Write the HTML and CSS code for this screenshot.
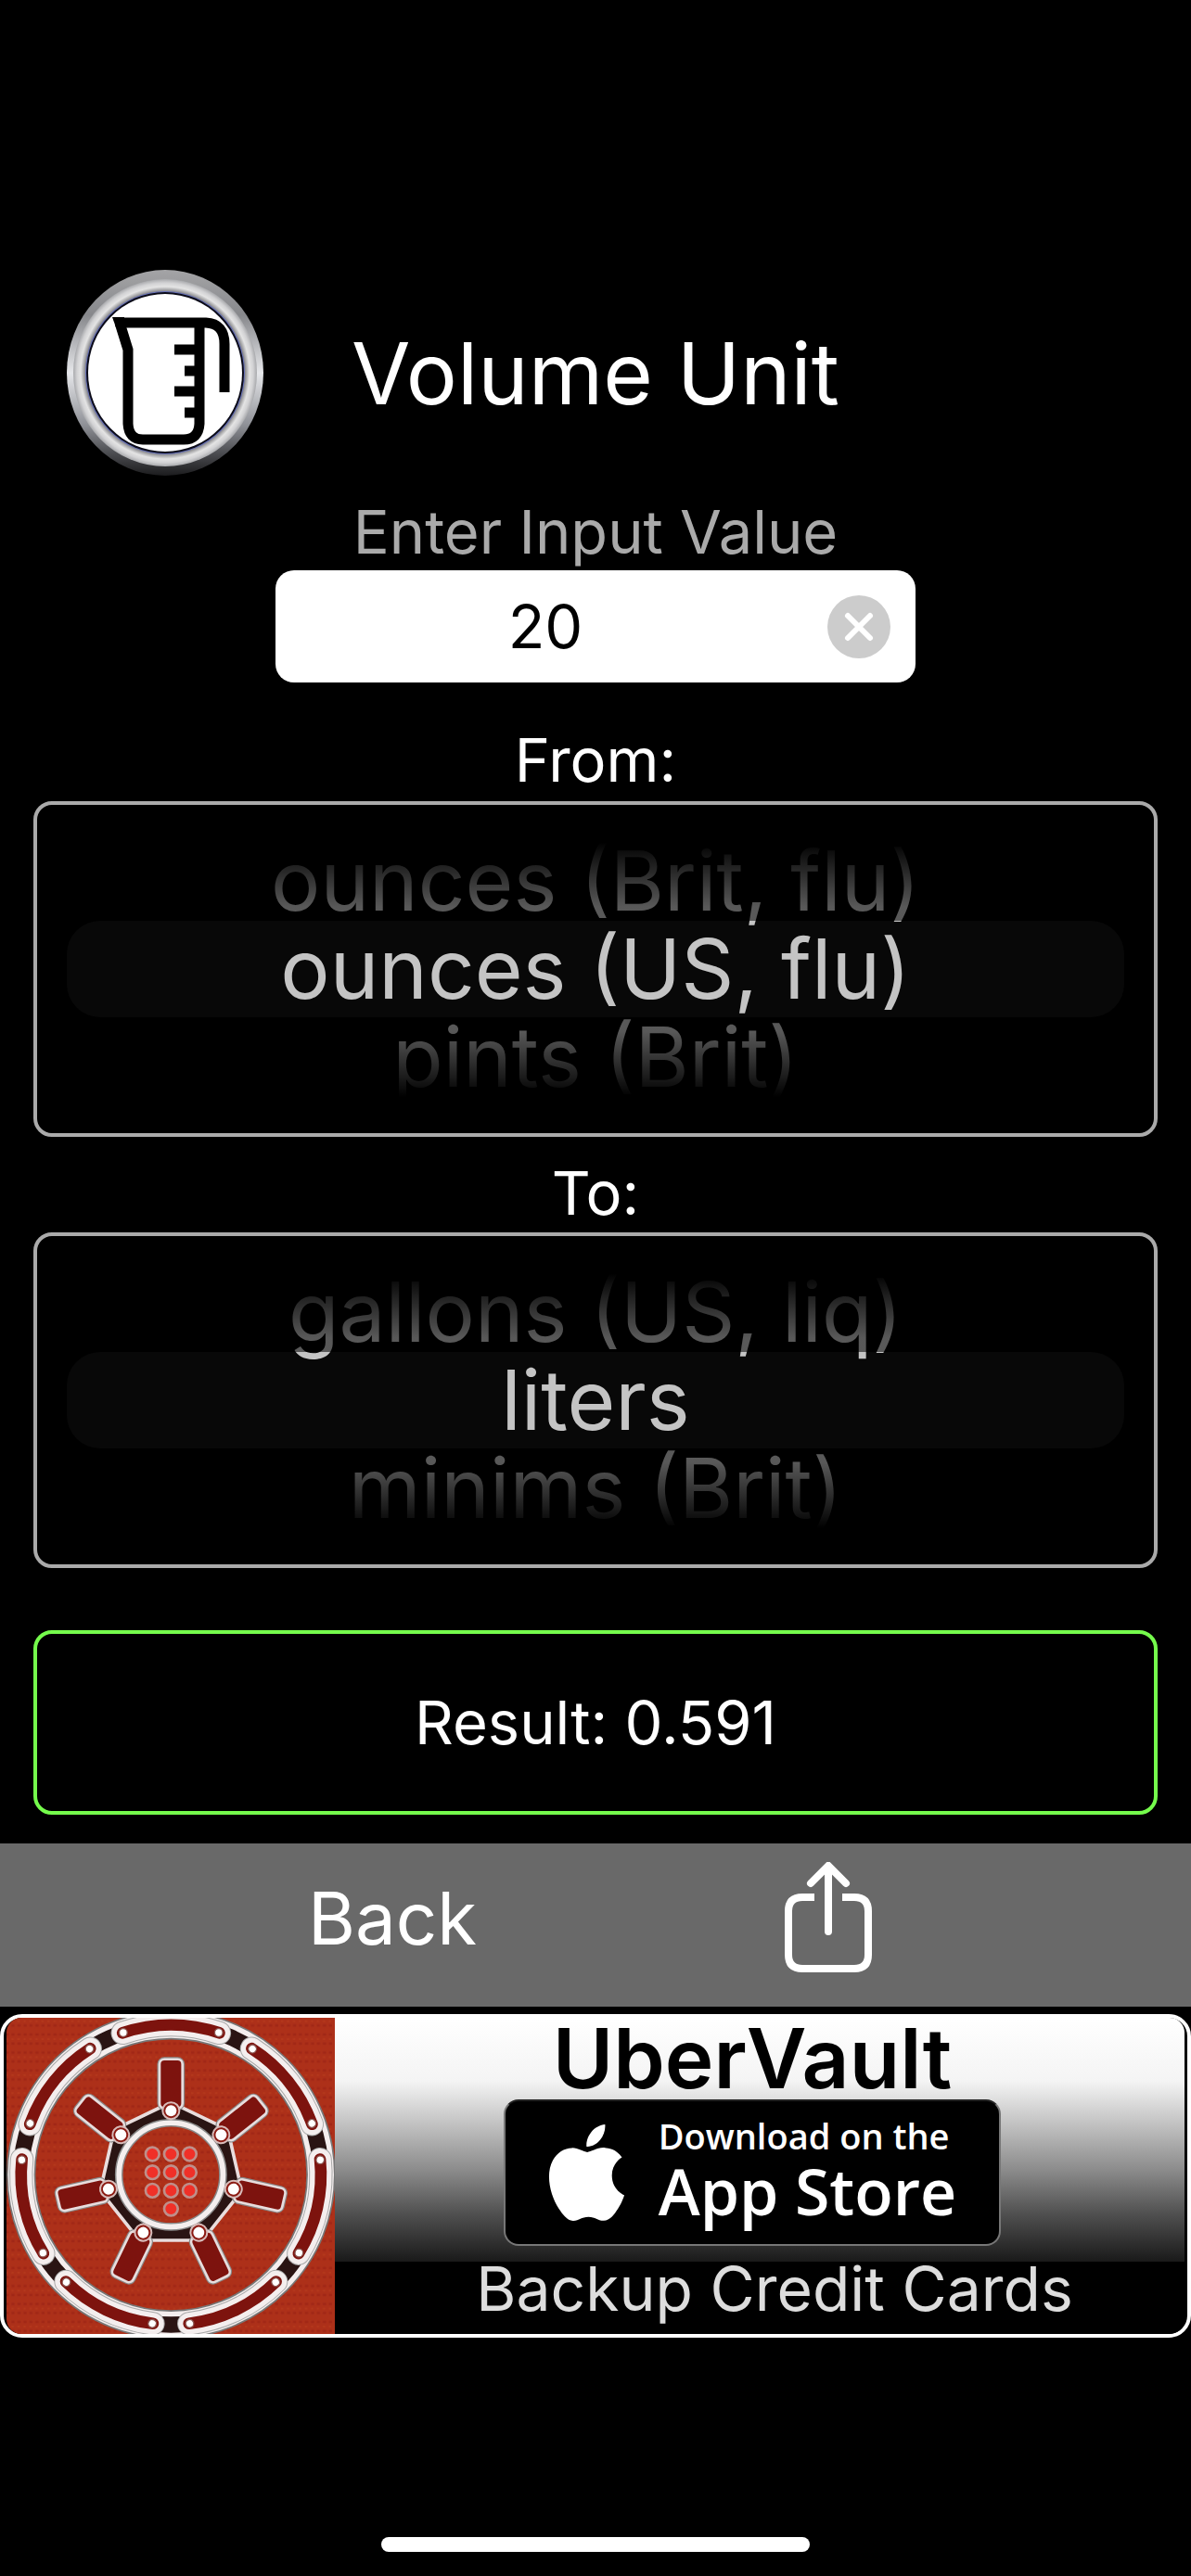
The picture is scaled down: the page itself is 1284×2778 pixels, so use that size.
FILE: index.html
```html
<!DOCTYPE html>
<html lang="en">
<head>
  <meta charset="UTF-8" />
  <meta name="viewport" content="width=device-width, initial-scale=1.0"/>
  <title>Volume Unit</title>
  <link rel="stylesheet" href="styles.css">
</head>
<body>
  <main class="converter">
    <header class="header">
      <svg class="logo" viewBox="0 0 212 223" aria-hidden="true">
        <defs>
          <linearGradient id="rim" x1="0" y1="0" x2="0" y2="1">
            <stop offset="0" stop-color="#a4a4a6"/>
            <stop offset="0.22" stop-color="#87888c"/>
            <stop offset="0.5" stop-color="#e6e7ea"/>
            <stop offset="0.75" stop-color="#909298"/>
            <stop offset="0.9" stop-color="#47484c"/>
            <stop offset="1" stop-color="#1c1c1e"/>
          </linearGradient>
          <radialGradient id="bevel">
            <stop offset="0.86" stop-color="#77777b"/>
            <stop offset="0.92" stop-color="#e4e4e4"/>
            <stop offset="0.96" stop-color="#d2d2d4"/>
            <stop offset="1" stop-color="#a8a9ac"/>
          </radialGradient>
        </defs>
        <ellipse cx="106" cy="111" rx="106" ry="111" fill="url(#rim)"/>
        <ellipse cx="106" cy="111" rx="99" ry="101" fill="url(#bevel)"/>
        <ellipse cx="106" cy="111" rx="86" ry="88" fill="#6670b8"/>
        <ellipse cx="106" cy="111" rx="85" ry="87" fill="#0b0b18"/>
        <ellipse cx="106" cy="111" rx="83" ry="85" fill="#fff"/>
        <g fill="none" stroke="#000" stroke-width="11">
          <path d="M57 57H150Q170 58 170 80V132"/>
          <path d="M57 57L66 86V166Q67 183 82 183H126Q142 183 143 166V57"/>
          <path d="M138 86H116M138 109H127M138 131H116M138 154H127"/>
        </g>
        <path d="M49 51H62V62H53Z"/>
      </svg>
      <h1>Volume Unit</h1>
    </header>

    <form class="form">
      <label class="label muted" for="value">Enter Input Value</label>
      <div class="field">
        <input type="text" id="value" inputmode="decimal" value="20">
        <button type="reset" class="clear" aria-label="Clear value">
          <svg viewBox="0 0 68 68">
            <circle cx="34" cy="34" r="34"/>
            <path d="M22 22L46 46M46 22L22 46"/>
          </svg>
        </button>
      </div>

      <h2 class="label from" id="fromLabel">From:</h2>
      <div class="picker" role="radiogroup" aria-labelledby="fromLabel">
        <input type="radio" name="from" id="fromOzBrit">
        <label for="fromOzBrit">ounces (Brit, flu)</label>
        <input type="radio" name="from" id="fromOzUs" checked>
        <label for="fromOzUs">ounces (US, flu)</label>
        <input type="radio" name="from" id="fromPints">
        <label for="fromPints">pints (Brit)</label>
      </div>

      <h2 class="label to" id="toLabel">To:</h2>
      <div class="picker" role="radiogroup" aria-labelledby="toLabel">
        <input type="radio" name="to" id="toGallons">
        <label for="toGallons">gallons (US, liq)</label>
        <input type="radio" name="to" id="toLiters" checked>
        <label for="toLiters">liters</label>
        <input type="radio" name="to" id="toMinims">
        <label for="toMinims">minims (Brit)</label>
      </div>

      <output class="result" for="value">Result: 0.591</output>
    </form>
  </main>

  <nav class="toolbar">
    <button type="button">Back</button>
    <button type="button" aria-label="Share">
      <svg class="share" viewBox="0 0 94 120">
        <path d="M32 38H19Q4 38 4 53V100Q4 115 19 115H75Q90 115 90 100V53Q90 38 75 38H62"/>
        <path class="arrow" d="M47 75V5M28 23L47 4L66 23"/>
      </svg>
    </button>
  </nav>

  <a class="banner" href="#">
    <svg class="vault" viewBox="22 76 1060 1021" preserveAspectRatio="none" aria-hidden="true">
      <defs>
        <pattern id="weave" width="58" height="58" patternUnits="userSpaceOnUse">
          <path fill="#ad3019" d="M0 0H58V58H0Z"/>
          <path stroke="#a12716" stroke-width="8" stroke-dasharray="10 9" d="M0 14H58M0 43H58"/>
          <path stroke="#b63a1c" stroke-width="5" stroke-dasharray="7 12" d="M0 29H58"/>
        </pattern>
        <g id="segment">
          <path d="M-156 -458A484 484 0 0 1 156 -458" fill="none" stroke="#aaa" stroke-width="76" stroke-linecap="round"/>
          <path d="M-156 -458A484 484 0 0 1 156 -458" fill="none" stroke="#f4eeee" stroke-width="70" stroke-linecap="round"/>
          <path d="M-156 -458A484 484 0 0 1 156 -458" fill="none" stroke="#7d130e" stroke-width="38" stroke-linecap="round"/>
          <circle cx="-154" cy="-459" r="13" fill="#fff" stroke="#8b5550" stroke-width="4"/>
          <circle cx="154" cy="-459" r="13" fill="#fff" stroke="#8b5550" stroke-width="4"/>
        </g>
        <g id="spoke">
          <rect x="-37" y="-373" width="74" height="158" rx="16" fill="#7d130e" stroke="#888" stroke-width="15"/>
          <rect x="-37" y="-373" width="74" height="158" rx="16" fill="#7d130e" stroke="#e8dddd" stroke-width="8"/>
          <circle cy="-207" r="27" fill="#8b1a12" stroke="#d8bcba" stroke-width="6"/>
          <circle cy="-207" r="18" fill="#fff"/>
        </g>
      </defs>
      <path fill="url(#weave)" d="M22 76H1082V1097H22Z"/>
      <g transform="translate(553 583)">
        <circle r="484" fill="none" stroke="#777" stroke-width="94"/>
        <circle r="484" fill="none" stroke="#f4eeee" stroke-width="84"/>
        <circle r="484" fill="none" stroke="#2a1413" stroke-width="52"/>
        <use href="#segment"/>
        <use href="#segment" transform="rotate(51.43)"/>
        <use href="#segment" transform="rotate(102.86)"/>
        <use href="#segment" transform="rotate(154.29)"/>
        <use href="#segment" transform="rotate(205.71)"/>
        <use href="#segment" transform="rotate(257.14)"/>
        <use href="#segment" transform="rotate(308.57)"/>
        <path fill="none" stroke="#e8dddd" stroke-width="60" d="M0 -207L162 -129L202 46L90 187L-90 187L-202 46L-162 -129Z"/>
        <path fill="none" stroke="#2a1413" stroke-width="38" d="M0 -207L162 -129L202 46L90 187L-90 187L-202 46L-162 -129Z"/>
        <circle r="168" fill="url(#weave)" stroke="#888" stroke-width="26"/>
        <circle r="168" fill="none" stroke="#f4eeee" stroke-width="17"/>
        <use href="#spoke"/>
        <use href="#spoke" transform="rotate(51.43)"/>
        <use href="#spoke" transform="rotate(102.86)"/>
        <use href="#spoke" transform="rotate(154.29)"/>
        <use href="#spoke" transform="rotate(205.71)"/>
        <use href="#spoke" transform="rotate(257.14)"/>
        <use href="#spoke" transform="rotate(308.57)"/>
        <g fill="#f03028" stroke="#bf8f8a" stroke-width="8">
          <circle cx="-60" cy="-67" r="22"/><circle cy="-67" r="22"/><circle cx="60" cy="-67" r="22"/>
          <circle cx="-60" cy="-8" r="22"/><circle cy="-8" r="22"/><circle cx="60" cy="-8" r="22"/>
          <circle cx="-60" cy="51" r="22"/><circle cy="51" r="22"/><circle cx="60" cy="51" r="22"/>
          <circle cy="110" r="22"/>
        </g>
      </g>
    </svg>
    <span class="ad">
      <strong>UberVault</strong>
      <span class="badge">
        <svg class="apple" viewBox="2 0 20 24" preserveAspectRatio="none" aria-hidden="true">
          <path d="M12.152 6.896c-.948 0-2.415-1.078-3.96-1.04-2.04.027-3.91 1.183-4.961 3.014-2.117 3.675-.546 9.103 1.519 12.09 1.013 1.454 2.208 3.09 3.792 3.039 1.52-.065 2.09-.987 3.935-.987 1.831 0 2.35.987 3.96.948 1.637-.026 2.676-1.48 3.676-2.948 1.156-1.688 1.636-3.325 1.662-3.415-.039-.013-3.182-1.221-3.22-4.857-.026-3.04 2.48-4.494 2.597-4.559-1.429-2.09-3.623-2.324-4.39-2.376-2-.156-3.675 1.09-4.61 1.09zM15.53 3.83c.843-1.012 1.4-2.427 1.245-3.83-1.207.052-2.662.805-3.532 1.818-.78.896-1.454 2.338-1.273 3.714 1.338.104 2.715-.688 3.559-1.701"/>
        </svg>
        <span class="badge-text">
          <small>Download on the</small>
          <b>App Store</b>
        </span>
      </span>
      <span class="tagline">Backup Credit Cards</span>
    </span>
  </a>

  <div class="home-indicator"></div>
</body>
</html>
```
FILE: styles.css
```css
* {
  box-sizing: border-box;
}

:root {
  --line: #aaa;
  --green: #75fb4c;
  --bar: #696969;
  --radius: 20px;
}

body {
  margin: 0;
  background-color: #000;
  font-family: Inter, 'Liberation Sans', sans-serif;
  color: #fff;
}

button {
  padding: 0;
  border: none;
  background: none;
  color: inherit;
  font: inherit;
  cursor: pointer;
}

svg {
  display: block;
}

.converter {
  padding: 291px 36px 31px;
}

.header {
  display: grid;
  grid-template-columns: 1fr auto 1fr;
  align-items: center;
  padding: 0 36px;
}

.logo {
  width: 212px;
}

h1 {
  margin: 0;
  font-size: 92px;
  font-weight: 400;
  line-height: 112px;
}

.form {
  display: flex;
  flex-direction: column;
  margin-top: 20px;
}

.label {
  margin: 0;
  font-size: 65px;
  font-weight: 400;
  line-height: 80px;
  text-align: center;
}

.muted {
  color: var(--line);
}

.from {
  margin: 44px 0 4px;
}

.to {
  margin: 21px 0 2px;
}

.field {
  display: flex;
  align-items: center;
  align-self: center;
  width: 57%;
  height: 121px;
  margin-top: 1px;
  padding: 0 27px;
  border-radius: var(--radius);
  background: #fff;
}

.field input {
  flex: 1;
  min-width: 0;
  padding: 0 40px 0 0;
  border: none;
  outline: none;
  background: none;
  color: #000;
  font: inherit;
  font-size: 65px;
  text-align: center;
}

.clear svg {
  width: 68px;
  fill: #ccc;
}

.clear path {
  stroke: #fff;
  stroke-width: 6;
  stroke-linecap: round;
}

/* wheel picker: the checked row is lit, its neighbours fade out */
.picker {
  position: relative;
  display: flex;
  flex-direction: column;
  padding: 39px 32px;
  border: 4px solid var(--line);
  border-radius: var(--radius);
}

.picker input {
  appearance: none;
  width: 0;
  height: 0;
  margin: 0;
}

.picker label {
  z-index: 1;
  color: #c4c4c4;
  font-size: 89px;
  line-height: 86px;
  text-align: center;
}

.picker input:checked + label {
  z-index: 0;
  border-radius: 36px;
  background: #080808;
  line-height: 104px;
}

.picker::after {
  content: "";
  position: absolute;
  z-index: 2;
  inset: 0;
  border-radius: var(--radius);
  background: linear-gradient(#000 40px, rgba(0, 0, 0, 0.55) 110px 125px, transparent 125px 229px, rgba(0, 0, 0, 0.55) 229px 244px, #000 315px);
  pointer-events: none;
}

.result {
  margin-top: 67px;
  padding: 56px 0 55px;
  border: 4px solid var(--green);
  border-radius: var(--radius);
  font-size: 65px;
  line-height: 80px;
  text-align: center;
}

.toolbar {
  display: flex;
  justify-content: space-evenly;
  align-items: center;
  height: 176px;
  padding: 0 12px 16px 0;
  background: var(--bar);
  font-size: 78px;
}

.share {
  width: 94px;
  fill: none;
  stroke: #fff;
  stroke-width: 8;
}

.arrow {
  stroke-linecap: round;
}

.banner {
  display: flex;
  margin-top: 8px;
  padding: 0 3px;
  border: 4px solid #fff;
  border-radius: 24px;
  color: #fff;
  text-decoration: none;
}

.vault {
  width: 354px;
  height: 341px;
  border-radius: 16px 0 0 16px;
}

.ad {
  flex: 1;
  display: flex;
  flex-direction: column;
  align-items: center;
  padding-right: 16px;
  border-radius: 0 16px 16px 0;
  background: linear-gradient(#fff, #f4f4f4 20%, #c8c8c8 32%, #8c8c8c 48%, #505050 62%, #1a1a1a 77%, #000 77%);
}

.ad strong {
  color: #000;
  font-size: 89px;
  font-weight: 600;
  line-height: 88px;
}

.badge {
  display: flex;
  align-items: center;
  gap: 36px;
  height: 158px;
  padding: 0 46px;
  border: 2px solid #777;
  border-top-color: #222;
  border-radius: 16px;
  background: #000;
  font-family: 'Open Sans', 'Noto Sans', sans-serif;
}

.apple {
  width: 83px;
  height: 104px;
  fill: #fff;
}

.badge-text {
  display: flex;
  flex-direction: column;
}

.badge small {
  font-size: 38px;
  font-weight: 600;
  line-height: 40px;
}

.badge b {
  font-size: 68px;
  font-weight: 600;
  line-height: 80px;
}

.tagline {
  padding-left: 48px;
  color: #ddd;
  font-size: 66px;
  line-height: 92px;
}

.home-indicator {
  width: 36%;
  height: 16px;
  margin: 215px auto 26px;
  border-radius: 8px;
  background: #fff;
}
```
